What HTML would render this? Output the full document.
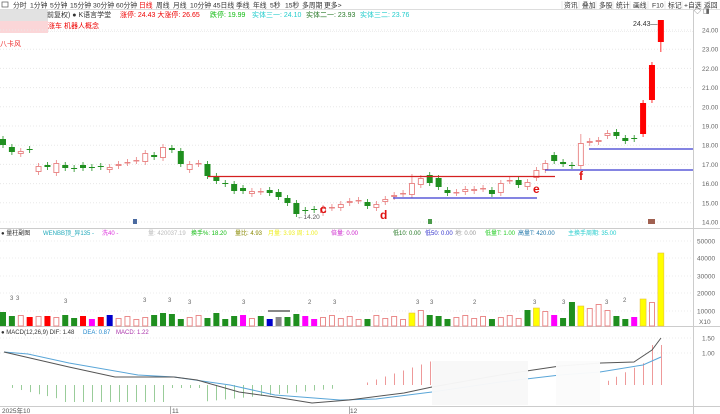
<!DOCTYPE html>
<html><head><meta charset="utf-8"><style>
body{margin:0;width:720px;height:414px;overflow:hidden;background:#fff;font-family:"Liberation Sans","Noto Sans CJK SC",sans-serif;}
svg{display:block}
text{font-family:"Liberation Sans","Noto Sans CJK SC",sans-serif;}
</style></head><body>
<svg id="s" width="720" height="414" xmlns="http://www.w3.org/2000/svg">
<rect width="720" height="414" fill="#fff"/>
<line x1="0" y1="9.5" x2="720" y2="9.5" stroke="#ddd"/>
<g font-size="6.8" fill="#333">
<rect x="2" y="2" width="6" height="5" fill="none" stroke="#555" stroke-width="0.7"/>
<text x="13" y="7.5">分时</text><text x="30" y="7.5">1分钟</text><text x="50" y="7.5">5分钟</text><text x="70" y="7.5">15分钟</text><text x="93" y="7.5">30分钟</text><text x="116" y="7.5">60分钟</text>
<text x="139" y="7.5" fill="#e00">日线</text><text x="156" y="7.5">周线</text><text x="173" y="7.5">月线</text><text x="190" y="7.5">10分钟</text><text x="213" y="7.5">45日线</text><text x="236" y="7.5">季线</text><text x="253" y="7.5">年线</text><text x="270" y="7.5">5秒</text><text x="285" y="7.5">15秒</text><text x="302" y="7.5">多周期</text><text x="324" y="7.5">更多&gt;</text>
<text x="564" y="7.5">资讯</text><text x="582" y="7.5">叠加</text><text x="599" y="7.5">多股</text><text x="616" y="7.5">统计</text><text x="633" y="7.5">画线</text><text x="652" y="7.5">F10</text><text x="668" y="7.5">标记</text><text x="684" y="7.5">+自选</text><text x="704" y="7.5">返回</text>
</g>
<g stroke="#ddd" stroke-width="0.6"><line x1="562" y1="1" x2="562" y2="9"/><line x1="579" y1="1" x2="579" y2="9"/><line x1="596" y1="1" x2="596" y2="9"/><line x1="613" y1="1" x2="613" y2="9"/><line x1="630" y1="1" x2="630" y2="9"/><line x1="648" y1="1" x2="648" y2="9"/><line x1="665" y1="1" x2="665" y2="9"/><line x1="682" y1="1" x2="682" y2="9"/><line x1="701" y1="1" x2="701" y2="9"/></g>
<rect x="0" y="10" width="48" height="12" fill="#e2e2e2"/>
<rect x="0" y="21" width="48" height="12" fill="#fbd6d8"/>
<text x="0" y="46" font-size="7" fill="#e33">八卡风</text>
<g font-size="7">
<text x="47" y="17" fill="#333">前复权) ● K语言学堂</text>
<text x="120" y="17" fill="#e00">涨停: 24.43 大涨停: 26.65</text>
<text x="210" y="17" fill="#1b1">跌停: 19.99</text>
<text x="252" y="17" fill="#2cc">实体三一: 24.10</text>
<text x="306" y="17" fill="#2a7a2a">实体二一: 23.93</text>
<text x="360" y="17" fill="#2cc">实体三二: 23.76</text>
<text x="48" y="28" fill="#e00">涨车 机器人概念</text>
</g>
<line x1="48" y1="31.5" x2="693" y2="31.5" stroke="#eee" stroke-dasharray="1 1"/>
<line x1="693.5" y1="10" x2="693.5" y2="414" stroke="#ccc"/>
<line x1="0" y1="228.5" x2="720" y2="228.5" stroke="#ccc"/>
<line x1="0" y1="326.5" x2="720" y2="326.5" stroke="#ccc"/>
<line x1="0" y1="406.5" x2="720" y2="406.5" stroke="#ccc"/>
<g id="grid"></g>
<g font-size="6.5" fill="#666" id="axis"></g>
<text x="694" y="13" font-size="7" fill="#666">◇ ◨</text>
<g id="candles"></g>
<line x1="208" y1="176.5" x2="555" y2="176.5" stroke="#d42020" stroke-width="1.3"/>
<line x1="393" y1="198" x2="537" y2="198" stroke="#3a3ad0" stroke-width="1.3"/>
<line x1="545" y1="170" x2="693" y2="170" stroke="#3a3ad0" stroke-width="1.3"/>
<line x1="589" y1="149" x2="693" y2="149" stroke="#3a3ad0" stroke-width="1.3"/>
<g font-size="12" font-weight="bold" fill="#e01010">
<text x="320" y="213">c</text><text x="380" y="219">d</text><text x="533" y="193">e</text><text x="579" y="180">f</text></g>
<text x="297" y="219" font-size="6.5" fill="#555">←14.20</text>
<text x="633" y="26" font-size="7" fill="#333">24.43—</text>
<rect x="133" y="219" width="4" height="5" fill="#4a6aa0"/>
<rect x="428" y="219" width="4" height="5" fill="#4a9a4a"/>
<rect x="648" y="219" width="7" height="5" fill="#a06050"/>
<g font-size="6">
<text x="1" y="235" fill="#333">● 量柱副图</text>
<text x="43" y="235" fill="#2ab">WENBB顶_异135 -</text>
<text x="102" y="235" fill="#d3d">洗40 -</text>
<text x="148" y="235" fill="#bbb">量: 420037.19</text>
<text x="191" y="235" fill="#1b1">换手%: 18.20</text>
<text x="235" y="235" fill="#880">量比: 4.93</text>
<text x="268" y="235" fill="#ee2">月量: 3.93 周: 1.00</text>
<text x="331" y="235" fill="#c2c">倍量: 0.00</text>
<text x="393" y="235" fill="#272">低10: 0.00</text>
<text x="425" y="235" fill="#33c">低50: 0.00</text>
<text x="455" y="235" fill="#999">地: 0.00</text>
<text x="485" y="235" fill="#2c2">低量T: 1.00</text>
<text x="518" y="235" fill="#27a">高量T: 420.00</text>
<text x="568" y="235" fill="#2cc">主换手周期: 35.00</text>
<text x="1" y="334" fill="#333">● MACD(12,26,9) DIF: 1.48</text>
<text x="83" y="334" fill="#28c">DEA: 0.87</text>
<text x="116" y="334" fill="#a3a">MACD: 1.22</text>
</g>
<g id="vol"></g>
<g id="macd"></g>
<rect x="432" y="361" width="96" height="44" fill="#f8f8f8" opacity="0.97"/>
<rect x="556" y="361" width="44" height="44" fill="#fbfbfb" opacity="0.97"/>
<g font-size="6.5" fill="#555"><text x="2" y="413">2025年10</text><text x="172" y="413">11</text><text x="350" y="413">12</text></g>
<line x1="170.5" y1="406" x2="170.5" y2="414" stroke="#aaa"/><line x1="349.5" y1="406" x2="349.5" y2="414" stroke="#aaa"/>
</svg>
<script>
var NS="http://www.w3.org/2000/svg";
function el(p,t,a){var e=document.createElementNS(NS,t);for(var k in a)e.setAttribute(k,a[k]);document.getElementById(p).appendChild(e);return e;}
for(var p=14;p<=24;p++){var y=30+(24-p)*19.2;
el('grid','line',{x1:0,x2:693,y1:y,y2:y,stroke:'#e8e8e8','stroke-dasharray':'1 2'});
var t=el('axis','text',{x:702,y:y+2.5});t.textContent=p+'.00';}
[[50000,241],[40000,258],[30000,276],[20000,293],[10000,311]].forEach(function(v){el('grid','line',{x1:0,x2:693,y1:v[1],y2:v[1],stroke:'#ececec','stroke-dasharray':'1 2'});var t=el('axis','text',{x:697,y:v[1]+2.5});t.textContent=v[0];});
var t=el('axis','text',{x:699,y:324});t.textContent='X10';
[[1.50,338],[1.00,353]].forEach(function(v){el('grid','line',{x1:0,x2:693,y1:v[1],y2:v[1],stroke:'#ececec','stroke-dasharray':'1 2'});var t=el('axis','text',{x:702,y:v[1]+2.5});t.textContent=v[0].toFixed(2);});
var C=[[139,145,'g'],[147,152,'g'],[151,154,'p'],[149,150,'g'],[166,172,'p'],[165,167,'g'],[163,173,'p'],[165,168,'g'],[168,169,'g'],[165,168,'g'],[167,168,'g'],[166,167,'g'],[167,170,'p'],[164,166,'p'],[162,163,'p'],[160,161,'p'],[153,162,'p'],[155,157,'g'],[147,158,'p'],[148,150,'g'],[151,164,'g'],[164,170,'p'],[163,164,'p'],[164,176,'g'],[176,181,'g'],[183,184,'g'],[184,191,'g'],[188,191,'g'],[191,194,'p'],[191,192,'p'],[190,193,'g'],[192,197,'g'],[198,203,'g'],[203,214,'g'],[210,211,'g'],[209,210,'g'],[208,213,'p'],[207,208,'p'],[204,208,'p'],[201,203,'p'],[200,201,'p'],[202,206,'g'],[204,208,'p'],[199,202,'p'],[195,197,'p'],[193,194,'p'],[183,195,'p'],[178,185,'p'],[175,183,'g'],[178,187,'g'],[190,193,'g'],[192,193,'p'],[189,192,'p'],[189,191,'p'],[188,189,'p'],[190,194,'g'],[183,193,'p'],[180,181,'p'],[180,185,'g'],[182,187,'p'],[170,178,'p'],[163,170,'p'],[155,161,'g'],[162,164,'g'],[165,166,'g'],[143,166,'p'],[141,143,'p'],[140,142,'p'],[133,136,'p'],[132,136,'g'],[138,141,'g'],[138,139,'g'],[103,134,'r'],[65,100,'r'],[20,42,'r']];
var col={g:'#1f8f1f',p:'#e88080',r:'#f00'};
C.forEach(function(c,i){var x=3+i*8.89;var w=6;var cl=col[c[2]];
var wt=c[0]-(i==74?0:3),wb=c[1]+(i==74?10:3);
if(i==46||i==65)wt-=6;
el('candles','line',{x1:x,x2:x,y1:wt,y2:wb,stroke:cl,'stroke-width':0.8});
var h=Math.max(1,c[1]-c[0]);
if(c[2]=='p')el('candles','rect',{x:x-w/2+0.5,y:c[0]+0.5,width:w-1,height:Math.max(0.5,h-1),fill:'#fff',stroke:cl,'stroke-width':0.9});
else el('candles','rect',{x:x-w/2,y:c[0],width:w,height:h,fill:cl});
});
var V="gghrhrhggrmrbhhhhgggghhggggmhgbsggmmhhhhhghhhhyhggghhhhghhhgyhmggyhhhggmyhy";
var vc={g:'#1f8f1f',r:'#f00',m:'#f0f',b:'#00c',y:'#ff0',s:'#888'};
var VH={0:14,1:10,3:9,5:10,18:13,19:12,24:13,26:10,32:9,33:12,41:7,46:13,47:16,48:11,59:16,60:18,61:15,64:24,65:20,66:18,67:22,68:16,72:27,73:24,74:73};
for(var i=0;i<75;i++){var x=3+i*8.89;var h=VH[i]||(7+((i*7)%5));var c=V[i]||'h';
if(c=='h')el('vol','rect',{x:x-2.5,y:326-h+0.5,width:5,height:h-0.5,fill:'#fff',stroke:'#e88080','stroke-width':0.9});
else el('vol','rect',{x:x-3,y:326-h,width:6,height:h,fill:vc[c],stroke:c=='y'?'#e8c040':'none','stroke-width':0.6});}
[[12,300],[18,300],[66,303],[145,302],[170,302],[190,304],[244,304],[310,304],[335,304],[418,304],[432,304],[475,304],[535,304],[564,304],[607,304],[625,302]].forEach(function(v){var t=el('vol','text',{x:v[0]-2,y:v[1],'font-size':6,fill:'#666'});t.textContent=(v[0]==310||v[0]==475||v[0]==625)?'2':'3';});
el('vol','rect',{x:268,y:310,width:22,height:2,fill:'#888'});
for(var i=1;i<75;i++){var x=Math.round(3+i*8.89)+0.5;var v=0;
if(x<340){if(x<60)v=-x/60*14;else if(x<170)v=-17;else if(x<200)v=-3;else v=-(17-(x-200)/10);}
if(x>360&&x<432)v=(x-360)/3;
if(x>432&&x<556)continue;
if(x>=600)v=(x-600)/2;
if(x>=650)v=40;
if(Math.abs(v)<0.5)continue;
el('macd','rect',{x:x-0.5,y:v>0?385-v:385,width:1,height:Math.abs(v),fill:v>0?'#e99':'#9c9'});}
el('macd','polyline',{points:'4,352 28,354 69,363 138,375 174,377 230,385 275,395 340,400 376,399 432,392 500,382 560,375 600,372 643,365 661,357',fill:'none',stroke:'#5aa6d8','stroke-width':1});
el('macd','polyline',{points:'4,352 69,367 115,377 174,377 197,380 239,392 275,397 312,403 349,400 404,393 432,387 500,375 560,366 601,363 634,362 652,350 661,338',fill:'none',stroke:'#555','stroke-width':1});
</script>
</body></html>
